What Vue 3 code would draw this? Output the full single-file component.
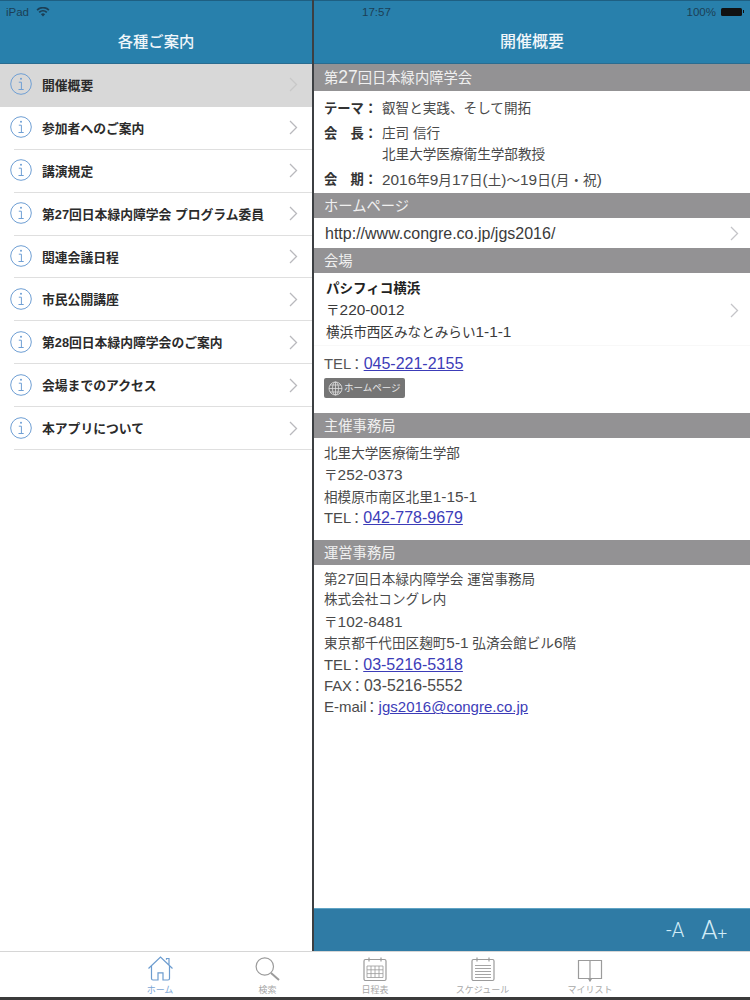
<script setup>
const menu = ['開催概要','参加者へのご案内','講演規定','第27回日本緑内障学会 プログラム委員','関連会議日程','市民公開講座','第28回日本緑内障学会のご案内','会場までのアクセス','本アプリについて']
const tabs = [
  { id: 'home', label: 'ホーム', on: true },
  { id: 'search', label: '検索' },
  { id: 'cal', label: '日程表' },
  { id: 'sched', label: 'スケジュール' },
  { id: 'book', label: 'マイリスト' },
]
</script>

<template>
  <div class="app">
    <div class="panes">
      <aside class="left">
        <header class="head">
          <div class="status"><span>iPad</span>
            <svg class="wifi" width="14" height="10" viewBox="0 0 14 10"><path d="M7 9.6 4.9 7.2a3 3 0 0 1 4.2 0zM3.8 6 2.6 4.7a6.4 6.4 0 0 1 8.8 0L10.200 6a4.700 4.700 0 0 0-6.400 0zM1.700 3.700.5 2.400a9.400 9.400 0 0 1 13 0l-1.200 1.300a7.800 7.800 0 0 0-10.600 0z" fill="#1c3f55"/></svg>
          </div>
          <h1>各種ご案内</h1>
        </header>
        <ul class="menu">
          <li v-for="(m, i) in menu" :key="m" :class="{ sel: i === 0 }">
            <svg class="info" width="24" height="24" viewBox="0 0 24 24"><circle cx="12" cy="12" r="10.300" fill="none" stroke="#6f9fd4" stroke-width="1"/><circle cx="12" cy="6.800" r="1" fill="#6f9fd4"/><path d="M9.800 10.200h2.600v7.300M9.500 17.500h5.200" fill="none" stroke="#6f9fd4" stroke-width="1"/></svg>
            <span class="mtext">{{ m }}</span>
            <svg class="chev" width="9" height="15" viewBox="0 0 9 15"><path d="M1 1l6.500 6.500L1 14" fill="none" :stroke="i === 0 ? '#c8c8c8' : '#b9b9bd'" stroke-width="1.300"/></svg>
          </li>
        </ul>
      </aside>
      <main class="right">
        <header class="head">
          <div class="status rs"><b>17:57</b><span class="batt">100%<i class="cell"></i></span></div>
          <h1>開催概要</h1>
        </header>
        <div class="body">
          <h2 class="sec first">第<span class="n">27</span>回日本緑内障学会</h2>
          <dl class="info-list">
            <div><dt>テーマ：</dt><dd>叡智と実践、そして開拓</dd></div>
            <div class="two"><dt>会　長：</dt><dd>庄司 信行<br>北里大学医療衛生学部教授</dd></div>
            <div><dt>会　期：</dt><dd><span class="n">2016</span>年<span class="n">9</span>月<span class="n">17</span>日<span class="n">(</span>土<span class="n">)</span>～<span class="n">19</span>日<span class="n">(</span>月・祝<span class="n">)</span></dd></div>
          </dl>
          <h2 class="sec">ホームページ</h2>
          <div class="url">http://www.congre.co.jp/jgs2016/<svg class="chev" width="9" height="15" viewBox="0 0 9 15"><path d="M1 1l6.500 6.500L1 14" fill="none" stroke="#c4c4c8" stroke-width="1.300"/></svg></div>
          <h2 class="sec">会場</h2>
          <div class="venue">
            <div><b>パシフィコ横浜</b><p>〒<span class="n">220-0012</span></p><p class="addr">横浜市西区みなとみらい<span class="n">1-1-1</span></p></div>
            <svg class="chev" width="9" height="15" viewBox="0 0 9 15"><path d="M1 1l6.500 6.500L1 14" fill="none" stroke="#c4c4c8" stroke-width="1.300"/></svg>
          </div>
          <div class="venue2">
            <p><span class="lb">TEL</span><span class="col">：</span><a>045-221-2155</a></p>
            <span class="hp">
              <svg width="15" height="15" viewBox="0 0 15 15" fill="none" stroke="#ddd" stroke-width=".8"><circle cx="7.500" cy="7.500" r="6.500"/><ellipse cx="7.500" cy="7.500" rx="3" ry="6.500"/><path d="M1 7.500h13M2 4h11M2 11h11M7.500 1v13"/></svg>
              ホームページ
            </span>
          </div>
          <h2 class="sec">主催事務局</h2>
          <div class="block b1">
            <p>北里大学医療衛生学部</p><p>〒<span class="n">252-0373</span></p><p>相模原市南区北里<span class="n">1-15-1</span></p><p><span class="lb">TEL</span><span class="col">：</span><a>042-778-9679</a></p>
          </div>
          <h2 class="sec">運営事務局</h2>
          <div class="block b2">
            <p>第<span class="n">27</span>回日本緑内障学会 運営事務局</p><p>株式会社コングレ内</p><p>〒<span class="n">102-8481</span></p><p>東京都千代田区麹町<span class="n">5-1</span> 弘済会館ビル<span class="n">6</span>階</p><p><span class="lb">TEL</span><span class="col">：</span><a>03-5216-5318</a></p><p><span class="lb">FAX</span><span class="col">：</span><span class="big">03-5216-5552</span></p><p><span class="mail">E-mail</span><span class="col">：</span><a class="mail">jgs2016@congre.co.jp</a></p>
          </div>
        </div>
        <footer class="foot"><span class="minus">-A</span><span class="plus">A<small>+</small></span></footer>
      </main>
    </div>
    <nav class="tabs">
      <div v-for="t in tabs" :key="t.id" class="tab" :class="{ on: t.on }">
        <svg width="26" height="26" viewBox="0 0 26 26" fill="none" :stroke="t.on ? '#6c9ccf' : '#9b9b9b'" stroke-width="1.200">
          <template v-if="t.id === 'home'">
            <path d="M1.500 12.500 13.500 1l12 11.500M19.500 3.800V2.500h2.500v7"/><path d="M4.500 10v12.500q0 1.500 1.500 1.500h5V16.800h5V24h5q1.500 0 1.500-1.500V10"/>
          </template>
          <template v-else-if="t.id === 'search'">
            <circle cx="9.800" cy="10.500" r="8.700"/><path d="M16 17 24 24" stroke-width="2"/>
          </template>
          <template v-else-if="t.id === 'cal'">
            <rect x="2" y="3.500" width="22" height="21" rx="1.500"/><path d="M7 1.500v4M19 1.500v4M8 3.500h10"/><path d="M5 10h16v11.500H5zM5 13.800h16M5 17.600h16M9 10v11.500M13 10v11.500M17 10v11.500" stroke-width=".8"/>
          </template>
          <template v-else-if="t.id === 'sched'">
            <rect x="2" y="3.500" width="22" height="21" rx="1.500"/><path d="M7 1.500v4M19 1.500v4M8 3.500h10"/><path d="M5 9.500h16M5 12.500h16M5 15.500h16M5 18.500h16M5 21.500h16" stroke-width=".9"/>
          </template>
          <template v-else>
            <path d="M1.500 4.500h23v18h-23zM13 4.500v19"/><path d="M11.500 22.500 13 25l1.500-2.500z" fill="#9b9b9b"/>
          </template>
        </svg>
        <span>{{ t.label }}</span>
      </div>
    </nav>
  </div>
</template>

<style>
html, body { margin: 0; background: #fff; }
</style>
<style scoped>
* { box-sizing: border-box; }
.app { width: 750px; height: 1000px; display: flex; flex-direction: column; font-family: "Liberation Sans", "Noto Sans CJK JP", sans-serif; color: #3a3a3a; overflow: hidden; border-bottom: 3px solid #3b3b3b; }
.panes { flex: 0 0 951px; display: flex; }
.left { width: 314px; border-right: 2px solid #3c3f42; display: flex; flex-direction: column; }
.right { flex: 1; display: flex; flex-direction: column; }
.head { height: 64px; background: #2880ac; border-top: 1px solid #1e5f82; color: #fff; flex: none; position: relative; border-bottom: 1px solid #2a6c90; }
.status { height: 20px; display: flex; align-items: center; gap: 7px; padding: 1px 0 0 6px; font-size: 11.500px; color: #1c3f55; }
.rs { justify-content: space-between; padding: 1px 6px 0 48px; }
.rs b { font-weight: 500; }
.batt { display: flex; align-items: center; gap: 5px; }
.cell { display: block; width: 21px; height: 8px; background: #111; border-radius: 1.500px; position: relative; margin-right: 2px; }
.cell::after { content: ""; position: absolute; right: -2px; top: 2.500px; width: 1.500px; height: 3px; background: #111; }
h1 { margin: 0; font-size: 16px; font-weight: 500; text-align: center; line-height: 42px; color: #f0f6fa; }
.left h1 { font-size: 15.300px; }
.menu { list-style: none; margin: 0; padding: 0; }
.menu li { height: 42.900px; display: flex; align-items: center; padding: 0 14px 0 9px; position: relative; background: #fff; }
.menu li::after { content: ""; position: absolute; left: 14px; right: 0; bottom: 0; height: 1px; background: #dfdfdf; }
.menu li.sel { background: #d8d8d8; }
.menu li.sel::after { display: none; }
.info { flex: none; margin-top: -2px; }
.chev { flex: none; margin-top: -1px; }
.mtext { flex: 1; margin: -2px 0 0 9px; font-size: 12.800px; font-weight: 700; color: #2b2b2b; }
.body { flex: 1; min-height: 0; overflow: hidden; }
.n { font-size: 1.130em; }
.sec { margin: 0; background: #939294; color: #f0f0f0; font-size: 14.300px; font-weight: 400; height: 25px; line-height: 27px; padding-left: 10px; }
.sec.first { height: 27px; line-height: 27px; }
.sec .n { font-size: 1.220em; }
.info-list { margin: 0; padding: 7px 10px 0; height: 102px; font-size: 13.600px; line-height: 21.500px; }
.info-list > div { display: flex; margin-bottom: 3px; }
.info-list dt { font-weight: 700; font-size: 13.300px; width: 58px; flex: none; color: #333; }
.info-list dd { margin: 0; color: #4a4a4a; }
.url { height: 30px; display: flex; align-items: center; justify-content: space-between; padding: 1px 11px 0 11px; font-size: 16px; color: #3a3a3a; }
.venue { height: 73px; padding: 3px 11px 0 12px; display: flex; justify-content: space-between; align-items: center; font-size: 13.600px; line-height: 21.500px; border-bottom: 1px solid #f8f8f8; }
.venue p { margin: 0; }
.venue .addr { margin-top: -1px; }
.venue b { color: #222; font-size: 13.500px; }
.venue2 { height: 67px; padding: 7px 10px 0; font-size: 14px; line-height: 21px; color: #555; }
.venue2 p { margin: 0 0 3px; }
.lb { font-size: 14.800px; }
.col { margin-left: -1.500px; }
a { color: #3c3cb8; text-decoration: underline; font-size: 16px; }
.big { font-size: 15.800px; }
.mail { font-size: 15px; }
.hp { display: inline-flex; align-items: center; gap: 1px; width: 81px; height: 20px; padding-left: 4px; background: #757575; color: #e8e8e8; font-size: 9.500px; border-radius: 2px; line-height: 1; }
.block { font-size: 13.600px; line-height: 21.400px; color: #4a4a4a; padding: 0 10px; }
.block p { margin: 0; height: 21.400px; }
.b1 { height: 102px; padding-top: 5px; }
.b2 { padding-top: 3px; }
.foot { flex: none; height: 43px; margin-top: auto; background: #2f7ba5; border-top: 1px solid #5fa3c4; display: flex; align-items: center; justify-content: flex-end; gap: 17px; padding-right: 23px; color: #d2ecf7; font-family: Roboto, "Liberation Sans", sans-serif; font-weight: 300; }
.minus { font-size: 20px; }
.plus { font-size: 26px; }
.plus small { font-size: 17px; }
.tabs { flex: 1; display: flex; justify-content: center; border-top: 1px solid #d6d6d6; background: #fff; }
.tab { width: 107.500px; display: flex; flex-direction: column; align-items: center; color: #a8a8a8; font-size: 9px; padding-top: 4px; gap: 1px; }
.tab.on { color: #7ba6d4; }
</style>
